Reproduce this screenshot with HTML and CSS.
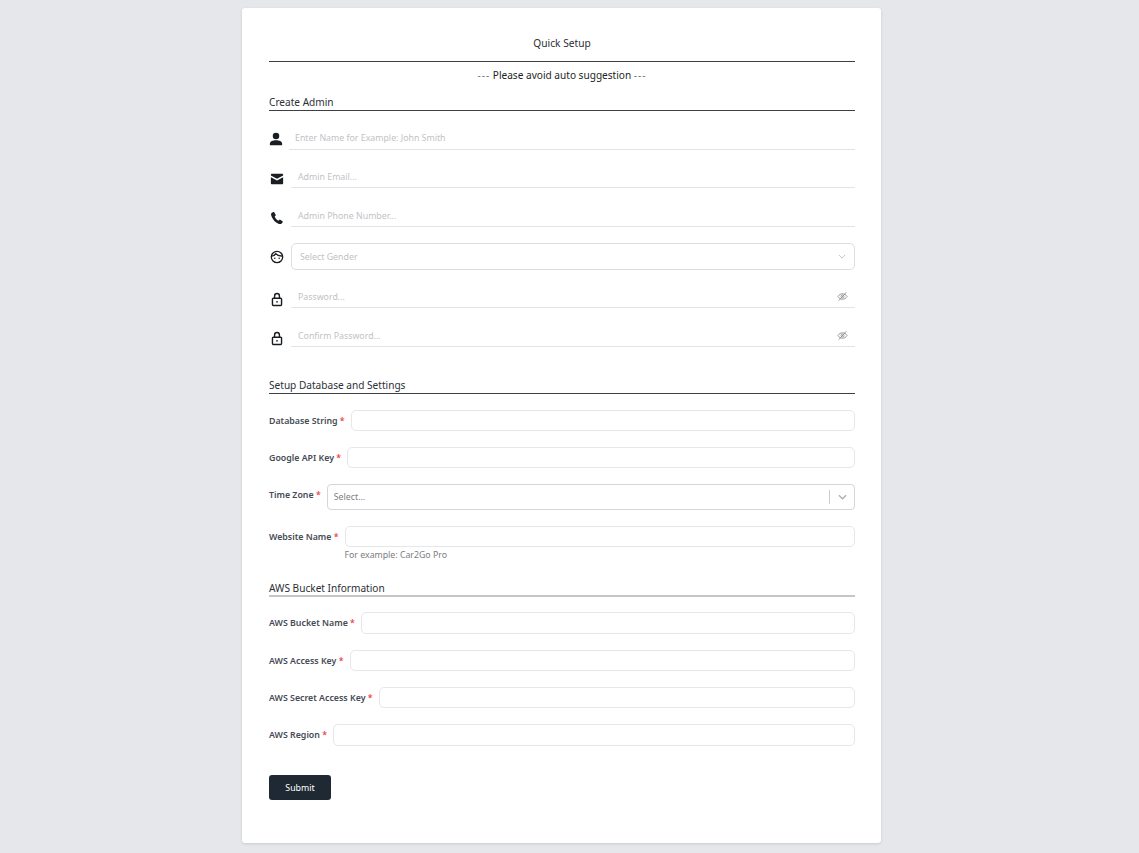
FILE: index.html
```html
<!DOCTYPE html>
<html lang="en">
<head>
    <meta charset="UTF-8">
    <title>Quick Setup</title>
    <link rel="stylesheet" href="styles.css">
</head>
<body>
    <div class="setup-card">
        <h1 class="setup-title">Quick Setup</h1>
        <p class="setup-notice"><span class="dashes">---</span> Please avoid auto suggestion <span class="dashes">---</span></p>

        <h2 class="section-head">Create Admin</h2>

        <div class="icon-row name-row">
            <svg class="row-icon" viewBox="0 0 16 16"><circle cx="8" cy="4.6" r="3.7" fill="#1a1d21"/><path d="M1 15v-1.6C1 10.6 4.4 9.4 8 9.4s7 1.2 7 4V15z" fill="#1a1d21"/></svg>
            <input class="line-input" type="text" placeholder="Enter Name for Example: John Smith">
        </div>
        <div class="icon-row email-row">
            <svg class="row-icon" viewBox="0 0 16 16"><path d="M1 3.2C1 2.5 1.5 2 2.2 2h11.6c.7 0 1.2.5 1.2 1.2v.9L8 7.8 1 4.100zM1 6l7 3.700L15 6v6.800c0 .7-.5 1.200-1.200 1.200H2.200C1.500 14 1 13.500 1 12.800z" fill="#1a1d21"/></svg>
            <input class="line-input" type="text" placeholder="Admin Email...">
        </div>
        <div class="icon-row">
            <svg class="row-icon" viewBox="0 0 16 16"><path d="M3.600 1.200 1.800 2.300C1 3 1.100 4.500 1.800 6.200c1.500 3.700 4.400 6.900 7.800 8.300 1.600.6 3 .6 3.700-.2l1.200-1.500c.3-.4.2-.9-.2-1.200l-2.600-1.600c-.4-.2-.8-.2-1.100.1l-1 1c-1.800-.8-3.600-2.900-4.300-4.700l1-.9c.3-.3.4-.7.200-1.100L4.800 1.500c-.3-.4-.8-.5-1.200-.3z" fill="#1a1d21"/></svg>
            <input class="line-input" type="text" placeholder="Admin Phone Number...">
        </div>
        <div class="icon-row gender-row">
            <svg class="row-icon" viewBox="0 0 16 16" fill="none" stroke="#1a1d21" stroke-width="1.500"><circle cx="8" cy="8" r="6.500"/><path d="M2 7c2 0 3.500-.8 4.600-2.800C8 6 10.500 7 14 6.800"/><circle cx="5.500" cy="9.500" r=".9" fill="#1a1d21" stroke="none"/><circle cx="10.500" cy="9.500" r=".9" fill="#1a1d21" stroke="none"/></svg>
            <div class="gender-select">
                <span>Select Gender</span>
                <svg class="thin-chevron" viewBox="0 0 10 6" fill="none" stroke="#b5b8bd" stroke-width="1"><path d="M1 1l4 4 4-4"/></svg>
            </div>
        </div>
        <div class="icon-row">
            <svg class="row-icon lock" viewBox="0 0 16 16" fill="none" stroke="#1a1d21" stroke-width="1.600"><rect x="2.800" y="6.500" width="10.400" height="8.300" rx="1"/><path d="M5.200 6.500V4.200C5.200 2.500 6.400 1.200 8 1.200s2.800 1.300 2.800 3v2.300"/><circle cx="8" cy="10.600" r="1" fill="#1a1d21" stroke="none"/></svg>
            <input class="line-input" type="password" placeholder="Password...">
            <svg class="eye-icon" viewBox="0 0 12 12" fill="none" stroke="#8d9096" stroke-width="1"><path d="M1 6c1.300-2 3-3 5-3s3.700 1 5 3c-1.300 2-3 3-5 3S2.300 8 1 6z"/><circle cx="6" cy="6" r="1.600"/><path d="M2 10.500 10 1.500"/></svg>
        </div>
        <div class="icon-row">
            <svg class="row-icon lock" viewBox="0 0 16 16" fill="none" stroke="#1a1d21" stroke-width="1.600"><rect x="2.800" y="6.500" width="10.400" height="8.300" rx="1"/><path d="M5.200 6.500V4.200C5.200 2.500 6.400 1.200 8 1.200s2.800 1.300 2.800 3v2.300"/><circle cx="8" cy="10.600" r="1" fill="#1a1d21" stroke="none"/></svg>
            <input class="line-input" type="password" placeholder="Confirm Password...">
            <svg class="eye-icon" viewBox="0 0 12 12" fill="none" stroke="#8d9096" stroke-width="1"><path d="M1 6c1.300-2 3-3 5-3s3.700 1 5 3c-1.300 2-3 3-5 3S2.300 8 1 6z"/><circle cx="6" cy="6" r="1.600"/><path d="M2 10.500 10 1.500"/></svg>
        </div>

        <h2 class="section-head setup-head">Setup Database and Settings</h2>

        <div class="field-row">
            <label>Database String <span class="req">*</span></label>
            <input class="box-input" type="text">
        </div>
        <div class="field-row">
            <label>Google API Key <span class="req">*</span></label>
            <input class="box-input" type="text">
        </div>
        <div class="field-row">
            <label>Time Zone <span class="req">*</span></label>
            <div class="zone-select">
                <span>Select...</span>
                <i class="zone-sep"></i>
                <svg class="zone-chevron" viewBox="0 0 10 6" fill="none" stroke="#b0b0b0" stroke-width="1.500"><path d="M1 1l4 4 4-4"/></svg>
            </div>
        </div>
        <div class="field-row">
            <label>Website Name <span class="req">*</span></label>
            <div class="field-wrap">
                <input class="box-input" type="text">
                <small class="field-hint">For example: Car2Go Pro</small>
            </div>
        </div>

        <h2 class="section-head aws-head">AWS Bucket Information</h2>

        <div class="field-row aws-first">
            <label>AWS Bucket Name <span class="req">*</span></label>
            <input class="box-input tall" type="text">
        </div>
        <div class="field-row">
            <label>AWS Access Key <span class="req">*</span></label>
            <input class="box-input" type="text">
        </div>
        <div class="field-row">
            <label>AWS Secret Access Key <span class="req">*</span></label>
            <input class="box-input" type="text">
        </div>
        <div class="field-row">
            <label>AWS Region <span class="req">*</span></label>
            <input class="box-input tall" type="text">
        </div>

        <button type="submit" class="submit-btn">Submit</button>
    </div>
</body>
</html>
```

FILE: styles.css
```css
* {
    margin: 0;
    padding: 0;
    box-sizing: border-box;
}

body {
    font-family: "Noto Sans", "Open Sans", sans-serif;
    background-color: #e5e7eb;
    padding: 8px 0 10px;
}

.setup-card {
    width: 639px;
    height: 835px;
    margin-left: 242px;
    padding: 0 26px 0 27px;
    background: white;
    border-radius: 3px;
    box-shadow: 0 1px 3px rgba(0, 0, 0, 0.12);
}

.setup-title {
    height: 54px;
    padding-top: 26px;
    font-size: 10.2px;
    line-height: 18px;
    font-weight: 400;
    color: #2b2f36;
    text-align: center;
    border-bottom: 1px solid #3c4046;
}

.setup-notice {
    height: 27px;
    font-size: 10.1px;
    line-height: 27px;
    color: #1c1f24;
    text-align: center;
}

.dashes {
    color: #6b7280;
    letter-spacing: 1px;
}

.section-head {
    height: 22px;
    padding-top: 5px;
    font-size: 10.1px;
    line-height: 16px;
    font-weight: 400;
    color: #2b2f36;
    border-bottom: 1px solid #3c4046;
}

.setup-head {
    margin-top: 25px;
}

.aws-head {
    height: 23px;
    margin-top: 12px;
    padding-top: 6px;
    border-bottom: 2px solid #c4c6c9;
}

.icon-row {
    position: relative;
    display: flex;
    align-items: center;
    height: 22px;
    margin-top: 17px;
}

.email-row {
    margin-top: 16px;
}

.name-row .line-input {
    margin-left: 6px;
    padding-left: 6px;
    padding-bottom: 1px;
}

.name-row .row-icon {
    margin-top: 0;
}

.row-icon {
    width: 14px;
    height: 14px;
    flex-shrink: 0;
    margin-top: 3px;
}

.icon-row:not(.name-row) .row-icon {
    margin-left: 1px;
}

.row-icon.lock {
    height: 15px;
    margin-top: 4px;
}

.line-input {
    flex: 1;
    height: 22px;
    margin-left: 7px;
    padding: 0 0 0 7px;
    border: none;
    border-bottom: 1px solid #e2e4e7;
    outline: none;
    font-family: inherit;
    font-size: 8.8px;
    background: transparent;
}

.line-input::placeholder {
    color: #bfc2c6;
}

.eye-icon {
    position: absolute;
    right: 7px;
    top: 5px;
    width: 11px;
    height: 11px;
}

.gender-row {
    height: 27px;
    margin-top: 16px;
    margin-bottom: -1px;
}

.gender-row .row-icon {
    margin-top: 0;
}

.gender-select {
    display: flex;
    flex: 1;
    align-items: center;
    justify-content: space-between;
    height: 27px;
    margin-left: 7px;
    padding: 0 8px;
    border: 1px solid #dcdee1;
    border-radius: 5px;
    font-size: 8.8px;
    color: #bfc2c6;
}

.thin-chevron {
    width: 8px;
    height: 5px;
}

.field-row {
    display: flex;
    align-items: flex-start;
    gap: 6px;
    margin-top: 16px;
}

.aws-first {
    margin-top: 15px;
}

.field-row label {
    height: 21px;
    padding-top: 1px;
    font-size: 8.8px;
    font-weight: 600;
    line-height: 21px;
    color: #454b55;
    white-space: nowrap;
}

.req {
    color: #ef4444;
}

.box-input {
    flex: 1;
    display: block;
    width: 100%;
    height: 21px;
    border: 1px solid #e5e7eb;
    border-radius: 5px;
    outline: none;
    background: white;
}

.box-input.tall {
    height: 22px;
}

.field-wrap {
    flex: 1;
}

.field-hint {
    display: block;
    margin-top: 1px;
    font-size: 8.75px;
    line-height: 14px;
    color: #7a7d82;
}

.zone-select {
    display: flex;
    flex: 1;
    align-items: center;
    height: 26px;
    padding-left: 6px;
    border: 1px solid #d4d6d9;
    border-radius: 4px;
    font-size: 8.8px;
    color: #808080;
}

.zone-select span {
    flex: 1;
}

.zone-sep {
    width: 1px;
    height: 14px;
    background: #cccccc;
}

.zone-chevron {
    width: 9px;
    height: 6px;
    margin: 0 7px 0 8px;
}

.submit-btn {
    display: block;
    width: 62px;
    height: 25px;
    margin-top: 29px;
    background: #1f2933;
    color: white;
    border: none;
    border-radius: 3px;
    font-family: inherit;
    font-size: 8.8px;
    font-weight: 400;
}
```
